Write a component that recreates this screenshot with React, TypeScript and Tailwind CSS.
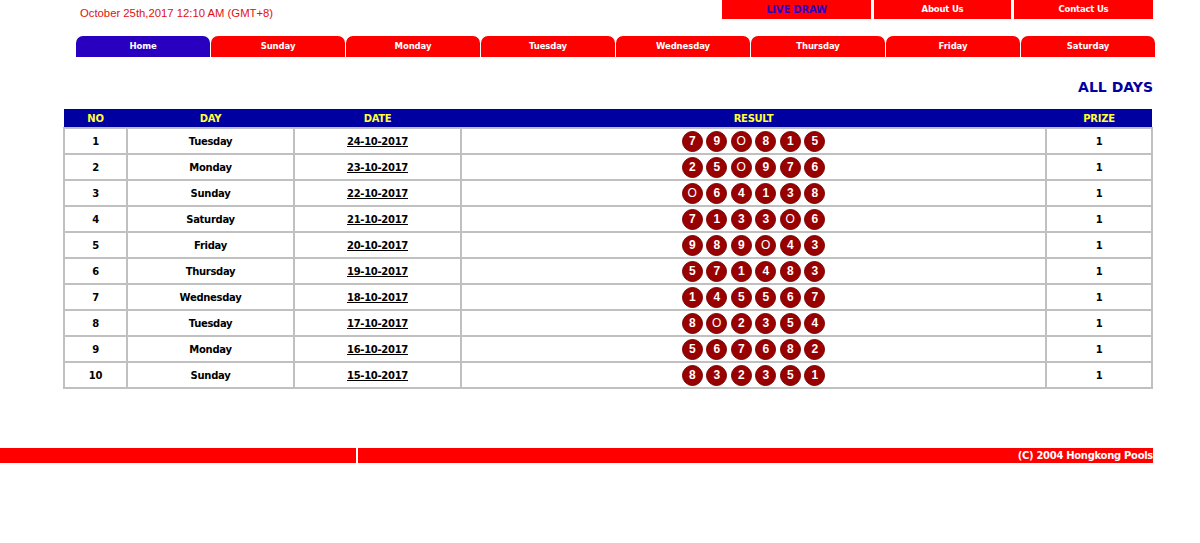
const tabs = ['Home', 'Sunday', 'Monday', 'Tuesday', 'Wednesday', 'Thursday', 'Friday', 'Saturday']

const rows = [
  { no: 1, day: 'Tuesday', date: '24-10-2017', result: '790815' },
  { no: 2, day: 'Monday', date: '23-10-2017', result: '250976' },
  { no: 3, day: 'Sunday', date: '22-10-2017', result: '064138' },
  { no: 4, day: 'Saturday', date: '21-10-2017', result: '713306' },
  { no: 5, day: 'Friday', date: '20-10-2017', result: '989043' },
  { no: 6, day: 'Thursday', date: '19-10-2017', result: '571483' },
  { no: 7, day: 'Wednesday', date: '18-10-2017', result: '145567' },
  { no: 8, day: 'Tuesday', date: '17-10-2017', result: '802354' },
  { no: 9, day: 'Monday', date: '16-10-2017', result: '567682' },
  { no: 10, day: 'Sunday', date: '15-10-2017', result: '832351' }
]

const tahoma = "font-['Tahoma','DejaVu_Sans',sans-serif]"

function Ball({ n }: { n: string }) {
  return (
    <span className="w-[21px] h-[21px] rounded-full bg-[#990000] border border-[#7a0000] text-white font-bold text-[12px] leading-none flex items-center justify-center font-['Liberation_Sans',Arial,sans-serif]">
      {n === '0' ? <span className="font-normal">O</span> : n}
    </span>
  )
}

export default function App() {
  return (
    <div className={`w-[1200px] h-[543px] bg-white ${tahoma}`}>
      {/* top bar */}
      <div className="flex h-[36px]">
        <div className="pl-[80px] pt-[5px] text-[11.3px] text-[#e01010] font-['Liberation_Sans',Arial,sans-serif]">
          October 25th,2017 12:10 AM (GMT+8)
        </div>
        <div className="ml-auto mr-[47px] flex gap-[3px] h-[19px]">
          <div className="w-[149px] bg-[#ff0000] flex items-center justify-center text-[10px] font-bold text-[#2a00c8] tracking-[-0.2px]">
            LIVE DRAW
          </div>
          <div className="w-[137px] bg-[#ff0000] flex items-center justify-center text-[8.5px] font-bold text-white tracking-[-0.2px]">
            About Us
          </div>
          <div className="w-[139px] bg-[#ff0000] flex items-center justify-center text-[8.5px] font-bold text-white tracking-[-0.2px]">
            Contact Us
          </div>
        </div>
      </div>

      {/* tabs */}
      <div className="ml-[76px] w-[1079px] flex gap-[1px] h-[21px]">
        {tabs.map((t, i) => (
          <div
            key={t}
            className={`flex-1 rounded-t-[7px] flex items-center justify-center text-[8.5px] font-bold text-white tracking-[-0.1px] ${i === 0 ? 'bg-[#2a00c0]' : 'bg-[#ff0000]'}`}
          >
            {t}
          </div>
        ))}
      </div>

      {/* heading */}
      <div className="w-[1153px] flex justify-end pt-[23px] h-[52px]">
        <span className="text-[14px] font-bold text-[#0000a0] leading-none">ALL DAYS</span>
      </div>

      {/* table */}
      <table className="ml-[63px] w-[1090px] border-collapse text-[10px] tracking-[-0.3px] font-bold text-black">
        <thead>
          <tr className="bg-[#0000a0] text-[#ffff33] h-[19px]">
            <th className="w-[63px] p-0 font-bold">NO</th>
            <th className="w-[167px] p-0 font-bold">DAY</th>
            <th className="w-[167px] p-0 font-bold">DATE</th>
            <th className="p-0 font-bold">RESULT</th>
            <th className="w-[106px] p-0 font-bold">PRIZE</th>
          </tr>
        </thead>
        <tbody>
          {rows.map(r => (
            <tr key={r.no} className="h-[26px]">
              <td className="border-2 border-[#c0c0c0] text-center p-0">{r.no}</td>
              <td className="border-2 border-[#c0c0c0] text-center p-0">{r.day}</td>
              <td className="border-2 border-[#c0c0c0] text-center p-0">
                <span className="underline">{r.date}</span>
              </td>
              <td className="border-2 border-[#c0c0c0] p-0">
                <div className="flex justify-center gap-[3.5px] tracking-normal">
                  {r.result.split('').map((d, i) => (
                    <Ball key={i} n={d} />
                  ))}
                </div>
              </td>
              <td className="border-2 border-[#c0c0c0] text-center p-0">1</td>
            </tr>
          ))}
        </tbody>
      </table>

      {/* footer */}
      <div className="mt-[59px] flex w-[1153px] h-[15px] gap-[2px]">
        <div className="w-[356px] bg-[#ff0000]" />
        <div className="flex-1 bg-[#ff0000] flex items-center justify-end text-[10px] tracking-[-0.3px] font-bold text-white leading-none">
          (C) 2004 Hongkong Pools
        </div>
      </div>
    </div>
  )
}
